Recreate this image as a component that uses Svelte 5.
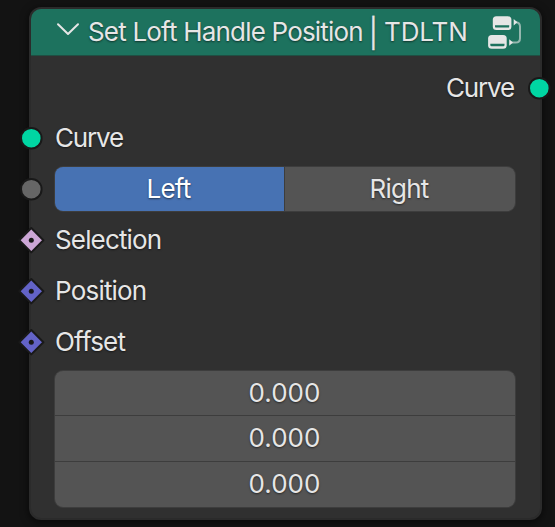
<script>
  const inputs = [
    { label: 'Selection', color: '#cca6d6', tracking: -0.85 },
    { label: 'Position', color: '#6363c7', tracking: -0.8 },
    { label: 'Offset', color: '#6363c7', tracking: -0.8 }
  ];
  const offset = ['0.000', '0.000', '0.000'];
  const modes = ['Left', 'Right'];
  let mode = $state('Left');
</script>

{#snippet circle(color)}
  <svg class="socket" width="24" height="24" viewBox="0 0 24 24">
    <circle cx="12.3" cy="12.2" r="10.3" fill={color} stroke="#191919" stroke-width="2" />
  </svg>
{/snippet}

<div class="canvas">
  <div class="node">
    <header>
      <svg class="chevron" width="24" height="16" viewBox="0 0 24 16">
        <path d="M2 2.3 L12 12 L22 2.3" fill="none" stroke="#e6e6e6" stroke-width="2" stroke-linecap="round" stroke-linejoin="round" />
      </svg>
      <div class="title">
        <span class="name">Set Loft Handle Position</span>
        <span class="bar">|</span>
        <span class="suffix">TDLTN</span>
      </div>
      <svg class="group" width="34" height="34" viewBox="0 0 34 34">
        <path d="M28 7.2 Q32 7.6 32 11.5 V23.2 Q32 27.6 27.6 27.6 H23" fill="none" stroke="#e6e6e6" stroke-opacity=".6" stroke-width="2" />
        <path d="M25.7 4 L29.4 7.2 L25.7 10.4 Z M21.2 24.2 L25 27.4 L21.2 30.8 Z" fill="#e6e6e6" />
        <rect x="4.8" y="1.2" width="18.6" height="13.9" rx="3.6" fill="#e6e6e6" />
        <rect x="0.1" y="19.9" width="18.6" height="13.9" rx="3.6" fill="#e6e6e6" />
        <path d="M7 10.2 H21.2 V11.4 Q21.2 12.6 20 12.6 H8.2 Q7 12.6 7 11.4 Z M2.3 28.8 H16.5 V30 Q16.5 31.2 15.3 31.2 H3.5 Q2.3 31.2 2.3 30 Z" fill="#1d725e" />
      </svg>
    </header>

    <div class="row output">
      <span class="curve">Curve</span>
      {@render circle('#00d6a3')}
    </div>
    <div class="row">
      {@render circle('#00d6a3')}
      <span class="curve">Curve</span>
    </div>
    <div class="row">
      {@render circle('#666666')}
      <div class="modes">
        {#each modes as name}
          <button class:active={mode === name} onclick={() => (mode = name)}>{name}</button>
        {/each}
      </div>
    </div>
    {#each inputs as input}
      <div class="row">
        <svg class="socket" width="28" height="28" viewBox="0 0 28 28">
          <path d="M14.3 2 L26.4 14.2 L14.3 26.4 L2.2 14.2 Z" fill={input.color} stroke="#191919" stroke-width="2" stroke-linejoin="round" />
          <circle cx="14.3" cy="14.2" r="2.5" fill="#191919" />
        </svg>
        <span style:letter-spacing="{input.tracking}px">{input.label}</span>
      </div>
    {/each}
    <div class="vector">
      {#each offset as value}
        <div class="number">{value}</div>
      {/each}
    </div>
  </div>
</div>

<style>
  .canvas {
    box-sizing: border-box;
    width: 555px;
    height: 527px;
    padding: 7px 13px 7px 29px;
    background: #131313;
    overflow: hidden;
    font: 26px/32px Inter, sans-serif;
    color: #e6e6e6;
    text-shadow: 0 1px 2px rgba(0, 0, 0, 0.55);
  }
  .node {
    box-sizing: border-box;
    height: 513px;
    border: 2px solid #2b2b2b;
    border-radius: 12px;
    background: #303030;
    box-shadow: 0 2px 9px rgba(0, 0, 0, 0.65);
  }
  header {
    box-sizing: border-box;
    display: flex;
    align-items: center;
    height: 47px;
    padding: 0 18px 0 25px;
    border-bottom: 1px solid #1f4f43;
    border-radius: 10px 10px 0 0;
    background: #1d725e;
    margin-bottom: 7px;
  }
  .chevron {
    flex: none;
    margin: -4px 8px 0 0;
  }
  .title {
    display: flex;
    flex: 1;
    white-space: nowrap;
  }
  .name {
    width: 281px;
    letter-spacing: -0.81px;
  }
  .bar {
    width: 15px;
    transform: translateY(0.7px) scaleY(1.1);
    -webkit-text-stroke: 0.3px #e6e6e6;
  }
  .suffix {
    letter-spacing: -0.1px;
  }
  .group {
    flex: none;
  }
  .row {
    position: relative;
    display: flex;
    align-items: center;
    height: 51px;
    padding: 0 24px;
  }
  .output {
    height: 49px;
    padding-right: 26px;
    justify-content: flex-end;
  }
  .curve {
    letter-spacing: -1.15px;
  }
  .socket {
    position: absolute;
    left: 0;
    top: 50%;
    transform: translate(-50%, -50%);
  }
  .output .socket {
    left: auto;
    right: 1px;
    transform: translate(50%, -50%);
  }
  .modes {
    box-sizing: border-box;
    display: grid;
    grid-template-columns: 229px 1fr;
    flex: 1;
    height: 46px;
    margin-left: -1px;
    border: 1px solid #3d3d3d;
    border-radius: 9px;
    background: #3d3d3d;
    gap: 1px;
    overflow: hidden;
  }
  button {
    padding: 0 2px 0 0;
    border: 0;
    background: #545454;
    color: inherit;
    font: inherit;
    letter-spacing: -0.75px;
    text-shadow: inherit;
  }
  .active {
    background: #4772b3;
    color: #fff;
  }
  .vector {
    box-sizing: border-box;
    display: grid;
    grid-template-rows: 44px 45px 45px;
    gap: 1px;
    height: 138px;
    margin: 3px 24px 0 23px;
    border: 1px solid #3d3d3d;
    border-radius: 9px;
    background: #3d3d3d;
    overflow: hidden;
  }
  .number {
    display: flex;
    align-items: center;
    justify-content: center;
    padding: 0 1px 1px 0;
    background: #545454;
  }
</style>
